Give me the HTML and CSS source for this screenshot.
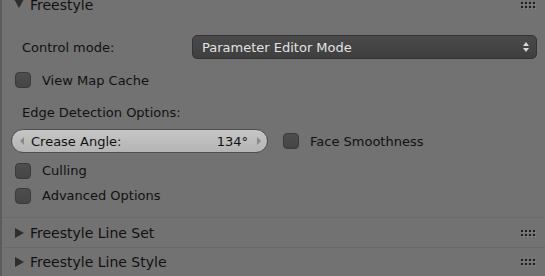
FILE: index.html
```html
<!DOCTYPE html>
<html lang="en">
<head>
    <meta charset="UTF-8">
    <title>Freestyle</title>
    <link rel="stylesheet" href="styles.css">
</head>
<body>
    <div class="properties">
        <div class="panel-header first">
            <span class="tri down"></span>
            <span class="title">Freestyle</span>
            <svg class="grip" width="17" height="8" viewBox="0 0 17 8">
                <g fill="#1e1e1e">
                    <rect x="1" y="0" width="2" height="2"/><rect x="5" y="0" width="2" height="2"/>
                    <rect x="9" y="0" width="2" height="2"/><rect x="13" y="0" width="2" height="2"/>
                    <rect x="1" y="4" width="2" height="2"/><rect x="5" y="4" width="2" height="2"/>
                    <rect x="9" y="4" width="2" height="2"/><rect x="13" y="4" width="2" height="2"/>
                </g>
                <g fill="#8a8a8a">
                    <rect x="3" y="2" width="1" height="1"/><rect x="7" y="2" width="1" height="1"/>
                    <rect x="11" y="2" width="1" height="1"/><rect x="15" y="2" width="1" height="1"/>
                    <rect x="3" y="6" width="1" height="1"/><rect x="7" y="6" width="1" height="1"/>
                    <rect x="11" y="6" width="1" height="1"/><rect x="15" y="6" width="1" height="1"/>
                </g>
            </svg>
        </div>
        <div class="panel-body">
            <div class="row control-row">
                <span class="label">Control mode:</span>
                <div class="dropdown">
                    <span>Parameter Editor Mode</span>
                    <span class="updown"><i class="up"></i><i class="dn"></i></span>
                </div>
            </div>
            <div class="row check-row view-row">
                <span class="checkbox"></span><span>View Map Cache</span>
            </div>
            <div class="row edge-row">
                <span class="label">Edge Detection Options:</span>
            </div>
            <div class="row slider-row">
                <div class="slider">
                    <i class="arr left"></i>
                    <span class="s-name">Crease Angle:</span>
                    <span class="s-value">134°</span>
                    <i class="arr right"></i>
                </div>
                <div class="check-row inline">
                    <span class="checkbox"></span><span>Face Smoothness</span>
                </div>
            </div>
            <div class="row check-row culling-row">
                <span class="checkbox"></span><span>Culling</span>
            </div>
            <div class="row check-row adv-row">
                <span class="checkbox"></span><span>Advanced Options</span>
            </div>
        </div>
        <div class="panel-header closed">
            <span class="tri right"></span>
            <span class="title">Freestyle Line Set</span>
            <svg class="grip" width="17" height="8" viewBox="0 0 17 8">
                <g fill="#1e1e1e">
                    <rect x="1" y="0" width="2" height="2"/><rect x="5" y="0" width="2" height="2"/>
                    <rect x="9" y="0" width="2" height="2"/><rect x="13" y="0" width="2" height="2"/>
                    <rect x="1" y="4" width="2" height="2"/><rect x="5" y="4" width="2" height="2"/>
                    <rect x="9" y="4" width="2" height="2"/><rect x="13" y="4" width="2" height="2"/>
                </g>
                <g fill="#8a8a8a">
                    <rect x="3" y="2" width="1" height="1"/><rect x="7" y="2" width="1" height="1"/>
                    <rect x="11" y="2" width="1" height="1"/><rect x="15" y="2" width="1" height="1"/>
                    <rect x="3" y="6" width="1" height="1"/><rect x="7" y="6" width="1" height="1"/>
                    <rect x="11" y="6" width="1" height="1"/><rect x="15" y="6" width="1" height="1"/>
                </g>
            </svg>
        </div>
        <div class="panel-header closed">
            <span class="tri right"></span>
            <span class="title">Freestyle Line Style</span>
            <svg class="grip" width="17" height="8" viewBox="0 0 17 8">
                <g fill="#1e1e1e">
                    <rect x="1" y="0" width="2" height="2"/><rect x="5" y="0" width="2" height="2"/>
                    <rect x="9" y="0" width="2" height="2"/><rect x="13" y="0" width="2" height="2"/>
                    <rect x="1" y="4" width="2" height="2"/><rect x="5" y="4" width="2" height="2"/>
                    <rect x="9" y="4" width="2" height="2"/><rect x="13" y="4" width="2" height="2"/>
                </g>
                <g fill="#8a8a8a">
                    <rect x="3" y="2" width="1" height="1"/><rect x="7" y="2" width="1" height="1"/>
                    <rect x="11" y="2" width="1" height="1"/><rect x="15" y="2" width="1" height="1"/>
                    <rect x="3" y="6" width="1" height="1"/><rect x="7" y="6" width="1" height="1"/>
                    <rect x="11" y="6" width="1" height="1"/><rect x="15" y="6" width="1" height="1"/>
                </g>
            </svg>
        </div>
    </div>
</body>
</html>
```

FILE: styles.css
```css
body {
    margin: 0;
    background-color: #727272;
    font-family: 'DejaVu Sans', Verdana, sans-serif;
    font-size: 13px;
    color: #111;
    overflow: hidden;
}

.properties {
    width: 545px;
    height: 276px;
    border-left: 2px solid #5c5c5c;
    box-sizing: border-box;
    display: flex;
    flex-direction: column;
}

.panel-header {
    display: flex;
    align-items: center;
    height: 29px;
    padding: 0 8px 0 12px;
    font-size: 14px;
    color: #111;
}

.panel-header.first {
    height: 22px;
    margin-top: -6px;
}

.panel-header.closed {
    border-top: 1px solid #6a6a6a;
}

.panel-header .title {
    margin-left: 6px;
    flex: 1;
}

.grip {
    margin-top: 2px;
}

.tri {
    width: 0;
    height: 0;
    display: inline-block;
}

.tri.down {
    border-left: 5px solid transparent;
    border-right: 5px solid transparent;
    border-top: 9px solid #2e2e2e;
    margin-left: 0;
    margin-top: -2px;
}

.tri.right {
    border-top: 5px solid transparent;
    border-bottom: 5px solid transparent;
    border-left: 9px solid #2e2e2e;
    margin-left: 1px;
    margin-right: 0;
}

.panel-body {
    padding: 20px 8px 9px 13px;
    display: flex;
    flex-direction: column;
}

.row {
    display: flex;
    align-items: center;
    height: 24px;
}

.label {
    padding-left: 7px;
}

.control-row .label {
    width: 170px;
}

.dropdown {
    flex: 1;
    height: 24px;
    box-sizing: border-box;
    display: flex;
    align-items: center;
    padding: 0 7px 0 9px;
    background: linear-gradient(#4a4a4a, #3f3f3f);
    border: 1px solid #333;
    border-radius: 5px;
    color: #e2e2e2;
}

.dropdown span:first-child {
    flex: 1;
}

.updown {
    display: flex;
    flex-direction: column;
    gap: 2px;
}

.updown i {
    width: 0;
    height: 0;
    border-left: 3px solid transparent;
    border-right: 3px solid transparent;
}

.updown .up {
    border-bottom: 4px solid #d8d8d8;
}

.updown .dn {
    border-top: 4px solid #d8d8d8;
}

.view-row {
    margin-top: 9px;
}

.edge-row {
    margin-top: 8px;
}

.slider-row {
    margin-top: 5px;
    margin-left: -4px;
}

.culling-row {
    margin-top: 5px;
    height: 25px;
}

.adv-row {
    height: 25px;
}

.check-row {
    display: flex;
    align-items: center;
}

.checkbox {
    width: 16px;
    height: 16px;
    box-sizing: border-box;
    margin-left: 0;
    margin-right: 11px;
    background: linear-gradient(#4e4e4e, #454545);
    border: 1px solid #3a3a3a;
    border-radius: 4px;
}

.check-row.inline {
    margin-left: 15px;
}

.slider {
    width: 257px;
    height: 24px;
    box-sizing: border-box;
    display: flex;
    align-items: center;
    padding: 0 6px 0 8px;
    background: linear-gradient(#c6c6c6, #b4b4b4);
    border: 1px solid #4e4e4e;
    border-radius: 12px;
    color: #111;
}

.s-name {
    flex: 1;
    margin-left: 7px;
}

.s-value {
    margin-right: 9px;
}

.arr {
    width: 0;
    height: 0;
    border-top: 4px solid transparent;
    border-bottom: 4px solid transparent;
}

.arr.left {
    border-right: 4px solid #8a8a8a;
}

.arr.right {
    border-left: 4px solid #8a8a8a;
}
```
